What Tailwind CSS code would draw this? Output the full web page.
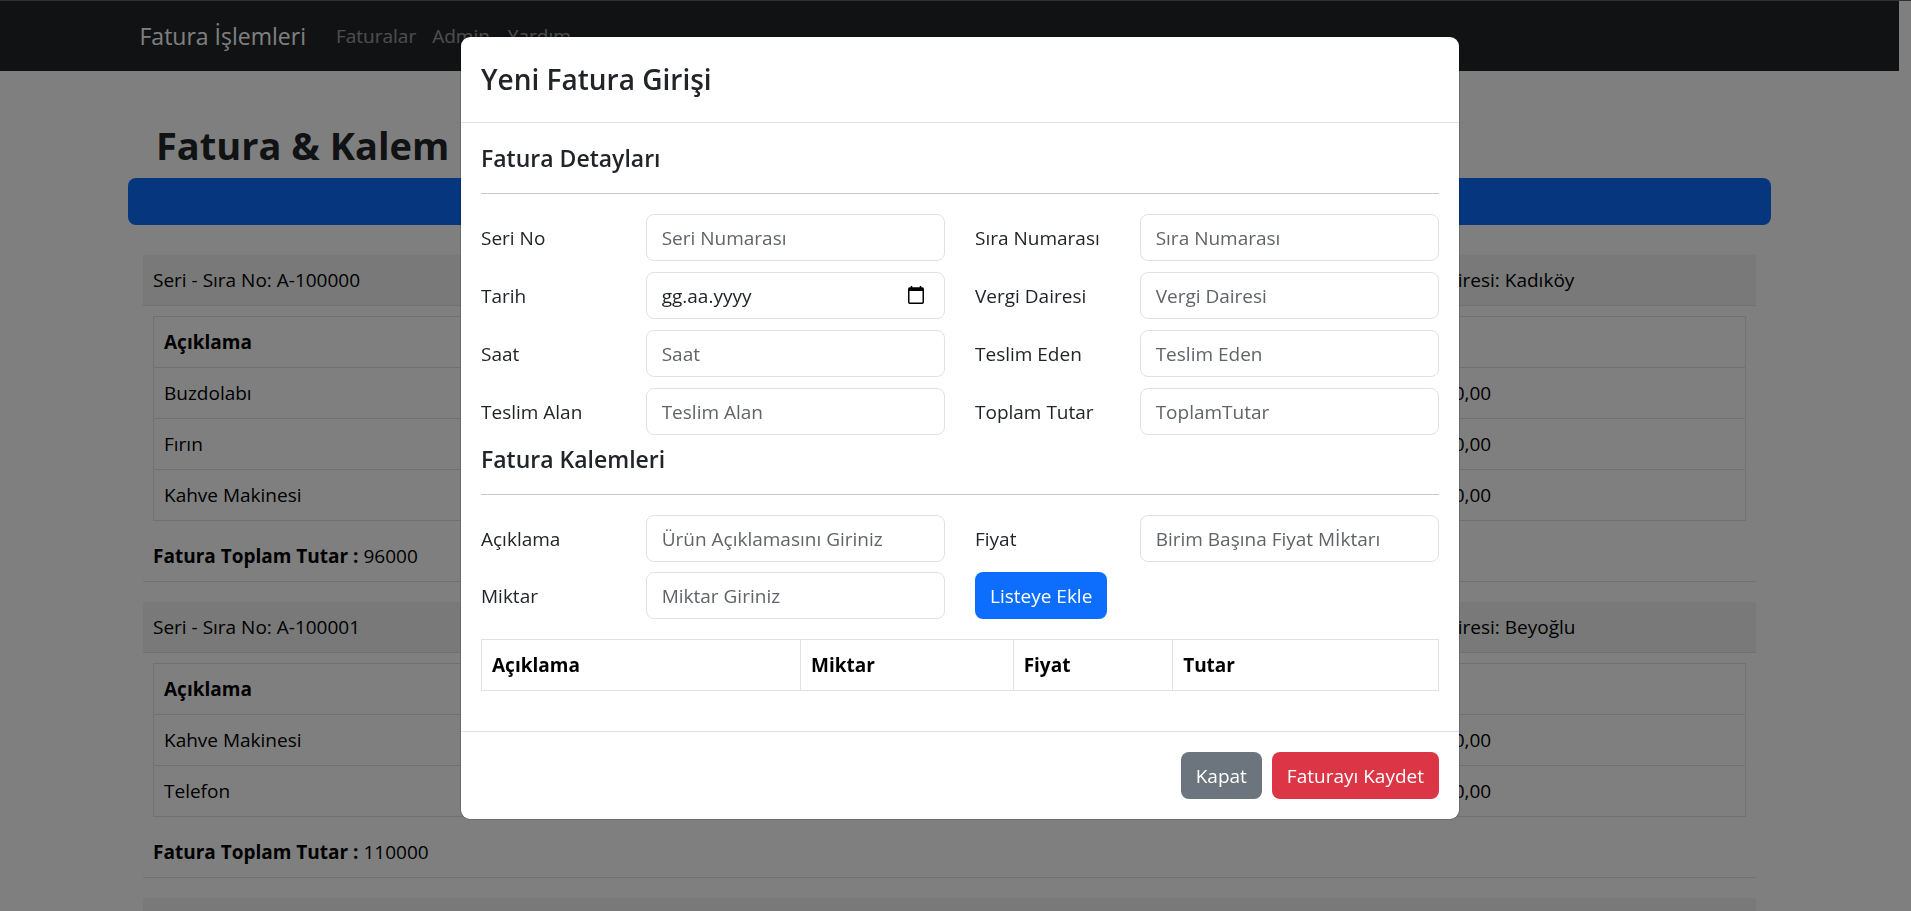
<!DOCTYPE html>
<html lang="tr">
<head>
<meta charset="utf-8">
<meta name="viewport" content="width=device-width, initial-scale=1">
<title>Fatura İşlemleri</title>
<script src="https://cdn.jsdelivr.net/npm/@tailwindcss/browser@4"></script>
</head>
<body class="h-screen overflow-hidden bg-white font-['Open_Sans','Noto_Sans',sans-serif] text-[19px] leading-[30px] text-black">
<div class="h-screen overflow-hidden border-t border-[#5f6368] pr-3">
  <nav class="bg-[#212529]">
    <div class="mx-auto flex h-[70px] max-w-[1650px] items-center px-[15px]">
      <a href="#" class="mr-[30px] text-[23px] text-white">Fatura İşlemleri</a>
      <a href="#" class="mr-4 text-white/55">Faturalar</a>
      <a href="#" class="mr-[18px] text-white/55">Admin</a>
      <a href="#" class="text-white/55">Yardım</a>
    </div>
  </nav>
  <main class="mx-auto max-w-[1643px] pt-[50px]">
    <h1 class="px-7 pb-[9px] text-[38px] leading-12 font-bold text-[#212529]">Fatura &amp; Kalem</h1>
    <button type="button" aria-label="Yeni Fatura Girişi" class="block h-[47px] w-full rounded-lg bg-[#0d6efd]"></button>
    <div class="mt-[30px] flex flex-col gap-5 px-[15px]">
      <section class="border-b border-[#dee2e6]">
        <header class="flex justify-between border-b border-[#dee2e6] bg-[#f2f2f2] p-2.5">
          <span>Seri - Sıra No: A-100000</span>
          <span class="w-[23%] pl-1">Vergi Dairesi: Kadıköy</span>
        </header>
        <div class="p-2.5">
          <table class="mb-5 w-full table-fixed border-collapse border border-[#dee2e6] text-left">
            <thead>
              <tr class="border-b border-[#dee2e6]"><th class="w-[78%] p-2.5">Açıklama</th><th class="p-2.5">Tutar</th></tr>
            </thead>
            <tbody>
              <tr class="border-b border-[#dee2e6]"><td class="p-2.5">Buzdolabı</td><td class="p-2.5">50.000,00</td></tr>
              <tr class="border-b border-[#dee2e6]"><td class="p-2.5">Fırın</td><td class="p-2.5">30.000,00</td></tr>
              <tr><td class="p-2.5">Kahve Makinesi</td><td class="p-2.5">16.000,00</td></tr>
            </tbody>
          </table>
          <p><b>Fatura Toplam Tutar :</b> 96000</p>
        </div>
      </section>
      <section class="border-b border-[#dee2e6]">
        <header class="flex justify-between border-b border-[#dee2e6] bg-[#f2f2f2] p-2.5">
          <span>Seri - Sıra No: A-100001</span>
          <span class="w-[23%] pl-1">Vergi Dairesi: Beyoğlu</span>
        </header>
        <div class="p-2.5">
          <table class="mb-5 w-full table-fixed border-collapse border border-[#dee2e6] text-left">
            <thead>
              <tr class="border-b border-[#dee2e6]"><th class="w-[78%] p-2.5">Açıklama</th><th class="p-2.5">Tutar</th></tr>
            </thead>
            <tbody>
              <tr class="border-b border-[#dee2e6]"><td class="p-2.5">Kahve Makinesi</td><td class="p-2.5">80.000,00</td></tr>
              <tr><td class="p-2.5">Telefon</td><td class="p-2.5">30.000,00</td></tr>
            </tbody>
          </table>
          <p><b>Fatura Toplam Tutar :</b> 110000</p>
        </div>
      </section>
      <section class="h-[51px] border-b border-[#dee2e6] bg-[#f2f2f2]"></section>
    </div>
  </main>
</div>

<div class="fixed inset-0 overflow-hidden bg-black/50 pt-9 pl-[9px]">
  <div role="dialog" aria-modal="true" aria-labelledby="baslik" class="mx-auto max-w-[1000px] rounded-[10px] border border-black/15 bg-white bg-clip-padding text-[#212529]">
    <header class="border-b border-[#dee2e6] p-5">
      <h2 id="baslik" class="text-[28px] leading-[45px] font-semibold">Yeni Fatura Girişi</h2>
    </header>
    <form>
      <div class="p-5">
        <h3 class="text-[23px] font-semibold">Fatura Detayları</h3>
        <hr class="my-5 border-[#c7c8c9]">
        <div class="grid grid-cols-12 items-center gap-x-[30px] gap-y-[11px]">
          <label for="seri" class="col-span-2">Seri No</label>
          <input id="seri" placeholder="Seri Numarası" class="col-span-4 h-[47px] min-w-0 rounded-lg border border-[#dee2e6] px-[15px] placeholder:text-[#606468]">
          <label for="sira" class="col-span-2">Sıra Numarası</label>
          <input id="sira" placeholder="Sıra Numarası" class="col-span-4 h-[47px] min-w-0 rounded-lg border border-[#dee2e6] px-[15px] placeholder:text-[#606468]">
          <label for="tarih" class="col-span-2">Tarih</label>
          <div class="col-span-4 flex h-[47px] items-center rounded-lg border border-[#dee2e6] px-[15px]">
            <input id="tarih" placeholder="gg.aa.yyyy" class="min-w-0 flex-1 placeholder:text-[#212529]">
            <button type="button" aria-label="Takvimi aç" class="mr-1">
              <svg width="18" height="20" viewBox="0 0 18 20" fill="none" stroke="#000" class="block"><path d="M2 2h14v3H2z" fill="#000" stroke="none"/><rect x="1.75" y="2" width="14.5" height="15.25" rx="1" stroke-width="1.5"/><path d="M4.5 0V3M13.5 0V3" stroke-width="1.5"/></svg>
            </button>
          </div>
          <label for="vergi" class="col-span-2">Vergi Dairesi</label>
          <input id="vergi" placeholder="Vergi Dairesi" class="col-span-4 h-[47px] min-w-0 rounded-lg border border-[#dee2e6] px-[15px] placeholder:text-[#606468]">
          <label for="saat" class="col-span-2">Saat</label>
          <input id="saat" placeholder="Saat" class="col-span-4 h-[47px] min-w-0 rounded-lg border border-[#dee2e6] px-[15px] placeholder:text-[#606468]">
          <label for="eden" class="col-span-2">Teslim Eden</label>
          <input id="eden" placeholder="Teslim Eden" class="col-span-4 h-[47px] min-w-0 rounded-lg border border-[#dee2e6] px-[15px] placeholder:text-[#606468]">
          <label for="alan" class="col-span-2">Teslim Alan</label>
          <input id="alan" placeholder="Teslim Alan" class="col-span-4 h-[47px] min-w-0 rounded-lg border border-[#dee2e6] px-[15px] placeholder:text-[#606468]">
          <label for="toplam" class="col-span-2">Toplam Tutar</label>
          <input id="toplam" placeholder="ToplamTutar" class="col-span-4 h-[47px] min-w-0 rounded-lg border border-[#dee2e6] px-[15px] placeholder:text-[#606468]">
        </div>
        <h3 class="mt-[9px] text-[23px] font-semibold">Fatura Kalemleri</h3>
        <hr class="my-5 border-[#c7c8c9]">
        <div class="grid grid-cols-12 items-center gap-x-[30px] gap-y-2.5">
          <label for="aciklama" class="col-span-2">Açıklama</label>
          <input id="aciklama" placeholder="Ürün Açıklamasını Giriniz" class="col-span-4 h-[47px] min-w-0 rounded-lg border border-[#dee2e6] px-[15px] placeholder:text-[#606468]">
          <label for="fiyat" class="col-span-2">Fiyat</label>
          <input id="fiyat" placeholder="Birim Başına Fiyat Mİktarı" class="col-span-4 h-[47px] min-w-0 rounded-lg border border-[#dee2e6] px-[15px] placeholder:text-[#606468]">
          <label for="miktar" class="col-span-2">Miktar</label>
          <input id="miktar" placeholder="Miktar Giriniz" class="col-span-4 h-[47px] min-w-0 rounded-lg border border-[#dee2e6] px-[15px] placeholder:text-[#606468]">
          <div class="col-span-6">
            <button type="button" class="block h-[47px] rounded-lg bg-[#0d6efd] px-[15px] text-white">Listeye Ekle</button>
          </div>
        </div>
        <table class="my-5 w-full table-fixed border-collapse border border-[#dee2e6] text-left text-black">
          <thead>
            <tr>
              <th class="w-1/3 border border-[#dee2e6] p-2.5">Açıklama</th>
              <th class="w-2/9 border border-[#dee2e6] p-2.5">Miktar</th>
              <th class="w-1/6 border border-[#dee2e6] p-2.5">Fiyat</th>
              <th class="border border-[#dee2e6] p-2.5">Tutar</th>
            </tr>
          </thead>
        </table>
      </div>
      <footer class="flex justify-end gap-2.5 border-t border-[#dee2e6] p-5">
        <button type="button" class="h-[47px] rounded-lg bg-[#6c757d] px-[15px] text-white">Kapat</button>
        <button type="submit" class="h-[47px] rounded-lg bg-[#dc3545] px-[15px] text-white">Faturayı Kaydet</button>
      </footer>
    </form>
  </div>
</div>
</body>
</html>
